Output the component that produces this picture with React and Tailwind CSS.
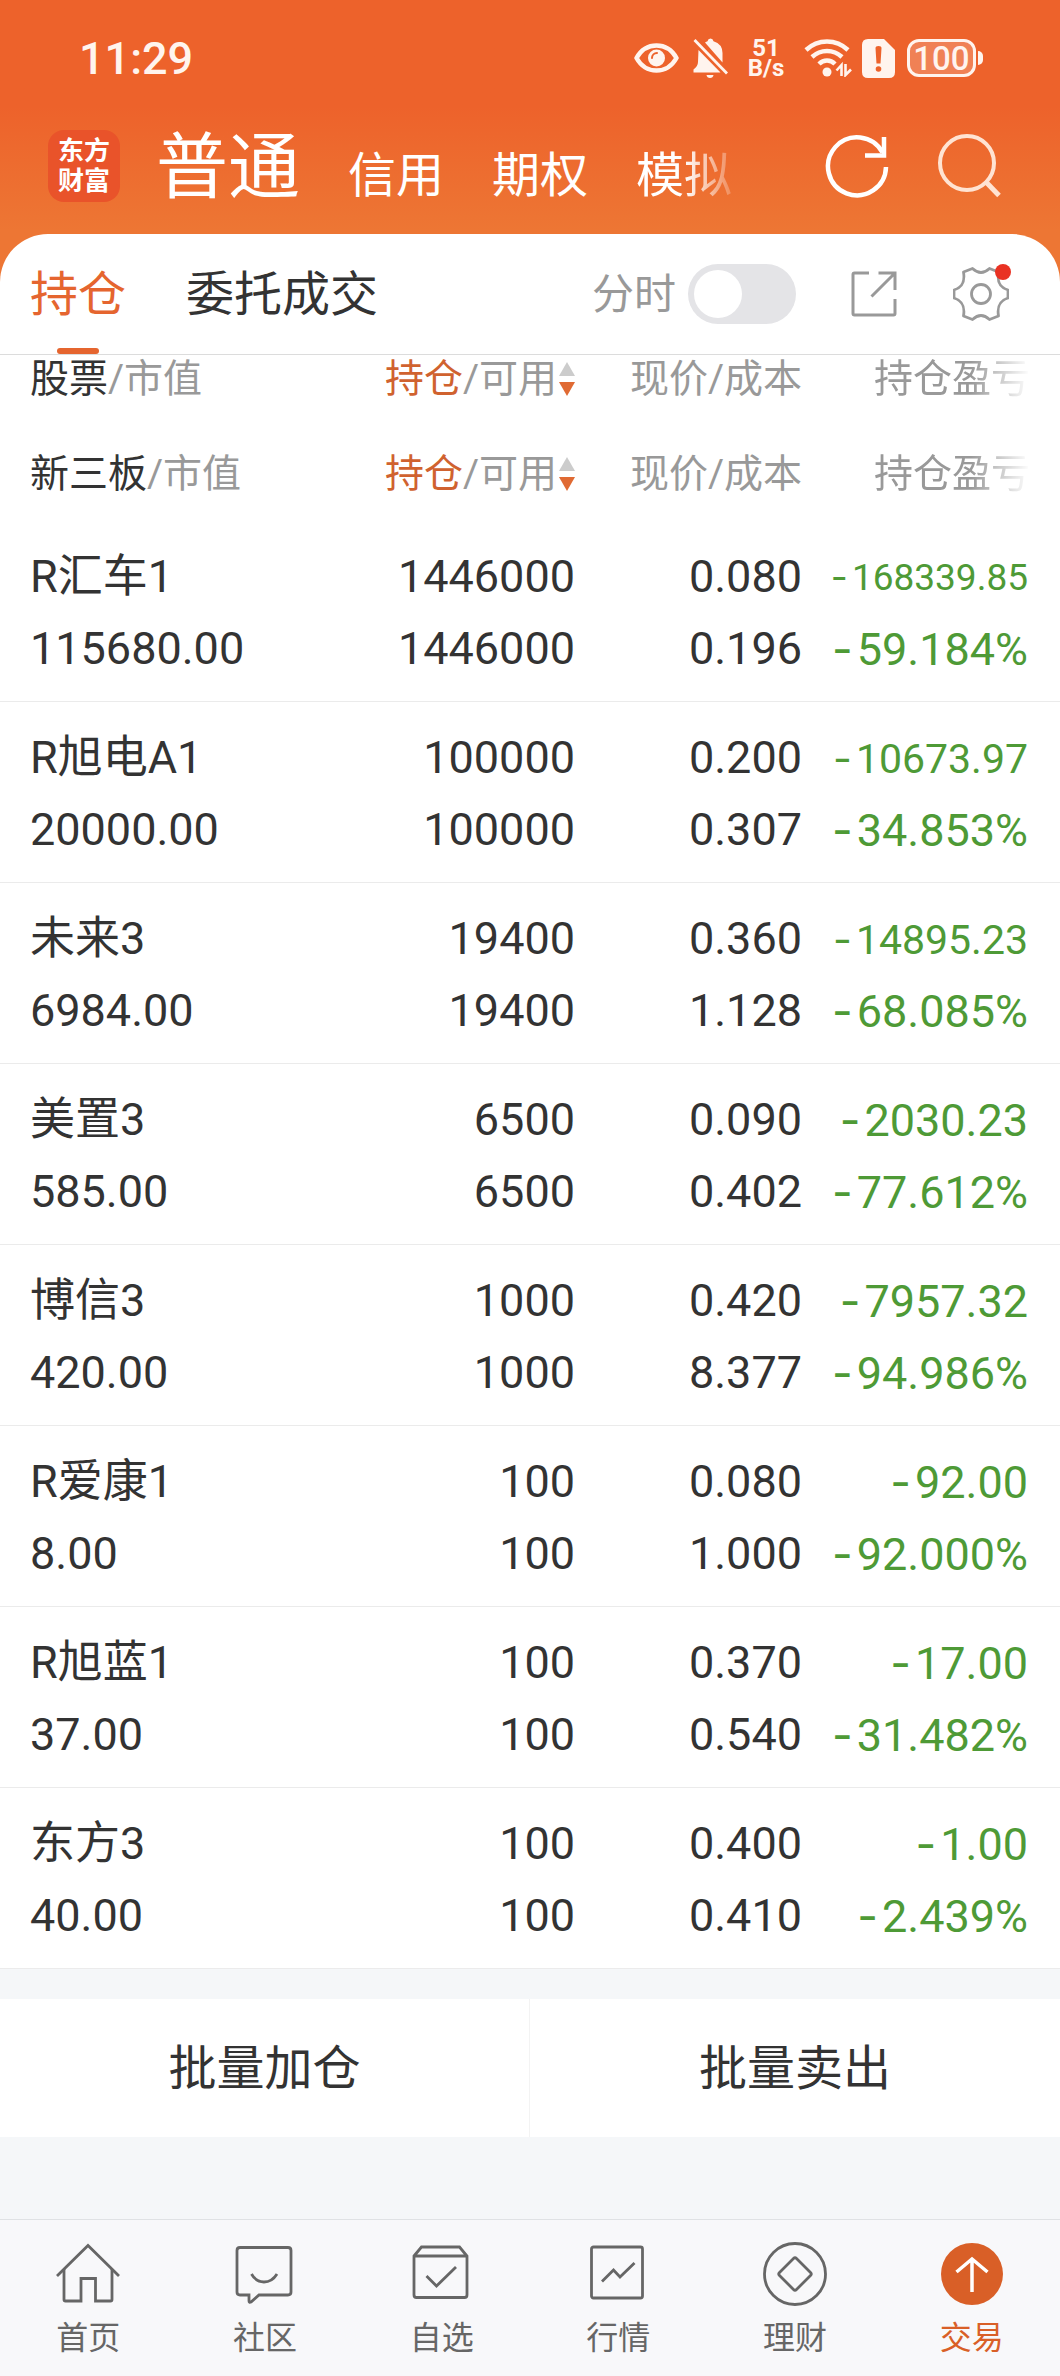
import React, { useState } from 'react';

const holdings = [
  { name: 'R汇车1', value: '115680.00', amount: '1446000', usable: '1446000', price: '0.080', cost: '0.196', profit: '168339.85', rate: '59.184%' },
  { name: 'R旭电A1', value: '20000.00', amount: '100000', usable: '100000', price: '0.200', cost: '0.307', profit: '10673.97', rate: '34.853%' },
  { name: '未来3', value: '6984.00', amount: '19400', usable: '19400', price: '0.360', cost: '1.128', profit: '14895.23', rate: '68.085%' },
  { name: '美置3', value: '585.00', amount: '6500', usable: '6500', price: '0.090', cost: '0.402', profit: '2030.23', rate: '77.612%' },
  { name: '博信3', value: '420.00', amount: '1000', usable: '1000', price: '0.420', cost: '8.377', profit: '7957.32', rate: '94.986%' },
  { name: 'R爱康1', value: '8.00', amount: '100', usable: '100', price: '0.080', cost: '1.000', profit: '92.00', rate: '92.000%' },
  { name: 'R旭蓝1', value: '37.00', amount: '100', usable: '100', price: '0.370', cost: '0.540', profit: '17.00', rate: '31.482%' },
  { name: '东方3', value: '40.00', amount: '100', usable: '100', price: '0.400', cost: '0.410', profit: '1.00', rate: '2.439%' },
];

// long amounts shrink so that they stay inside the last column
const profitSize = (text) => {
  if (text.length > 8) return 'text-[37px]';
  if (text.length > 7) return 'text-[41px]';
  return 'text-[45px]';
};

const StatusBar = () => (
  <div className="flex h-[116px] items-center pr-[77px] pl-[79px] text-[#fff4ee]">
    <span className="mr-auto text-[45px] leading-none font-medium">11:29</span>
    <svg className="h-[30px] w-[45px]" viewBox="0 0 45 30" fill="none">
      <path d="M2.5 15C7 7 14 2.5 22.5 2.5S38 7 42.5 15C38 23 31 27.500 22.500 27.500S7 23 2.500 15Z" stroke="currentColor" strokeWidth="4.500" strokeLinejoin="round" />
      <circle cx="22.5" cy="15" r="8.5" fill="currentColor" />
      <path d="M18 15a5 5 0 0 1 5-5" stroke="#ed622b" strokeWidth="2" strokeLinecap="round" />
    </svg>
    <svg className="ml-3.5 h-10 w-[35px]" viewBox="0 0 35 40" fill="none">
      <path d="M12 4.500Q13.500 3.500 14.500 3.200Q15 0.500 17.500 0.500T20.500 3.200Q29.500 6 29.500 15V24.500Z" fill="currentColor" />
      <path d="M5.500 12L27.500 34.500H0.500V31.500Q5 28 5 24Z" fill="currentColor" />
      <path d="M1.500 2L34 35.500" stroke="currentColor" strokeWidth="2.800" />
      <path d="M13.500 37H20.500Q20 40 17 40T13.500 37Z" fill="currentColor" />
    </svg>
    <span className="ml-[18px] w-10 text-center text-[24px] leading-[20px] font-bold">
      51
      <br />
      B/s
    </span>
    <svg className="ml-[18px] h-[38px] w-12" viewBox="0 0 48 38" fill="none">
      <path d="M2 11Q11 2.500 23 2.500T44 11" stroke="currentColor" strokeWidth="4.500" />
      <path d="M8 18Q14.500 12 23 12T38 18" stroke="currentColor" strokeWidth="4.500" />
      <path d="M15 25Q18.500 21.500 23 21.500T31 25" stroke="currentColor" strokeWidth="4.500" />
      <circle cx="23" cy="33" r="4.500" fill="currentColor" />
      <path d="M37.500 37V26L32.500 31.500M41.500 25V36L47 30.500" stroke="currentColor" strokeWidth="2.600" />
    </svg>
    <svg className="ml-2.5 h-[39px] w-[33px]" viewBox="0 0 33 39">
      <path d="M6 0H22L33 11V33Q33 39 27 39H6Q0 39 0 33V6Q0 0 6 0Z" fill="currentColor" />
      <path d="M13.500 9Q13.500 7 16.500 7T19.500 9L18.500 24.500H14.500Z" fill="#ed622b" />
      <circle cx="16.5" cy="30" r="2.800" fill="#ed622b" />
    </svg>
    <span className="ml-3 flex h-[38px] w-[69px] items-center justify-center rounded-[12px] border-3 border-[#fff4ee] bg-white/20 text-[33px] leading-none font-medium">
      100
    </span>
    <span className="ml-0.5 h-3.5 w-[5px] rounded-r-md bg-[#fff4ee]" />
  </div>
);

const TopBar = () => (
  <div className="flex h-[118px] items-center pr-[59px] pb-[18px] pl-12 text-white">
    <div className="flex size-[72px] shrink-0 flex-col items-center justify-center rounded-2xl bg-[#e9532a] text-[26px] leading-[30px] font-bold">
      <span>东方</span>
      <span>财富</span>
    </div>
    <nav className="ml-9 flex items-baseline gap-12 pt-3 whitespace-nowrap">
      <a href="#normal" className="text-[72px] leading-[80px]">普通</a>
      <a href="#credit" className="text-[48px] leading-[80px]">信用</a>
      <a href="#option" className="text-[48px] leading-[80px]">期权</a>
      <a href="#demo" className="text-[48px] leading-[80px] [mask-image:linear-gradient(to_right,#000_50%,rgba(0,0,0,0.2))]">模拟</a>
    </nav>
    <button type="button" aria-label="刷新" className="ml-auto">
      <svg className="size-16" viewBox="0 0 64 64" fill="none" stroke="currentColor" strokeWidth="4.500">
        <path d="M61 33A29 29 0 1 1 57.500 18.500" />
        <path d="M59 3V21.500H40" />
      </svg>
    </button>
    <button type="button" aria-label="搜索" className="ml-12 text-[#ffe3d2]">
      <svg className="size-16" viewBox="0 0 64 64" fill="none" stroke="currentColor" strokeWidth="4">
        <circle cx="30" cy="29" r="27" />
        <path d="M49 48L62 61.500" strokeWidth="5" />
      </svg>
    </button>
  </div>
);

const PanelTabs = () => {
  const [minute, setMinute] = useState(false);

  return (
    <div className="flex h-[121px] items-stretch border-b border-[#dcdcdc] pr-[51px] pl-[30px]">
      <button type="button" className="relative pt-0.5 text-[48px] text-[#e5652f]">
        持仓
        <span className="absolute bottom-0 left-1/2 h-1.5 w-[42px] -translate-x-1/2 rounded-full bg-[#e5652f]" />
      </button>
      <button type="button" className="ml-[60px] pt-0.5 text-[48px] text-[#333]">委托成交</button>
      <label className="ml-auto flex items-center gap-3 text-[42px] text-[#999]">
        分时
        <input
          type="checkbox"
          checked={minute}
          onChange={(e) => setMinute(e.target.checked)}
          className="h-[60px] w-[108px] appearance-none rounded-full bg-[#e4e4e7] p-1.5 before:block before:size-12 before:rounded-full before:bg-white checked:bg-[#e5652f] checked:before:ml-auto"
        />
      </label>
      <button type="button" aria-label="分享" className="ml-[55px] text-[#999]">
        <svg className="size-[46px]" viewBox="0 0 46 46" fill="none" stroke="currentColor" strokeWidth="3">
          <path d="M18 2H3.500Q2 2 2 3.500V42.500Q2 44 3.500 44H42.500Q44 44 44 42.500V28" />
          <path d="M27.500 2H44V19M44 2L20.500 25.500" />
        </svg>
      </button>
      <button type="button" aria-label="设置" className="ml-14 text-[#999]">
        <span className="relative block">
          <svg className="size-14" viewBox="0 0 56 56" fill="none" stroke="currentColor" strokeWidth="2.800" strokeLinejoin="round">
            <path d="M19.500 2.500Q28 10.500 36.500 2.500L45.500 6C44 15 46 21 55 24V32C46 35 44 41 45.500 50L36.500 53.500Q28 45.500 19.500 53.500L10.500 50C12 41 10 35 1 32V24C10 21 12 15 10.500 6Z" />
            <circle cx="28" cy="28" r="9.500" />
          </svg>
          <span className="absolute -top-0.5 -right-0.5 size-4 rounded-full bg-[#e93223]" />
        </span>
      </button>
    </div>
  );
};

const HoldingHead = ({ title, cell }) => (
  <>
    <colgroup>
      <col />
      <col className="w-[235px]" />
      <col className="w-[227px]" />
      <col className="w-[258px]" />
    </colgroup>
    <thead className="text-[39px] leading-[44px] whitespace-nowrap text-[#999]">
      <tr>
        <th className={`${cell} pl-[30px] text-left font-normal`}>
          <span className="text-[#333]">{title}</span>/市值
        </th>
        <th className={`${cell} font-normal`}>
          <span className="flex items-center justify-end gap-0.5">
            <span>
              <span className="text-[#d0622f]">持仓</span>/可用
            </span>
            <svg className="h-[34px] w-4" viewBox="0 0 16 34">
              <path d="M8 0L16 14H0Z" fill="#ccc" />
              <path d="M0 20H16L8 34Z" fill="#e06a33" />
            </svg>
          </span>
        </th>
        <th className={`${cell} text-right font-normal`}>现价/成本</th>
        <th className={`${cell} pr-[30px] text-right font-normal`}>
          <span className="[mask-image:linear-gradient(to_right,#000_62%,transparent)]">持仓盈亏</span>
        </th>
      </tr>
    </thead>
  </>
);

// two stacked values of one table cell
const Pair = ({ top, bottom, topClass = '' }) => (
  <>
    <div className={`h-[72px] ${topClass}`}>{top}</div>
    <div className="h-[72px]">{bottom}</div>
  </>
);

const Loss = ({ children }) => (
  <>
    <span className="mr-1 font-[Inter]">-</span>
    {children}
  </>
);

const Holdings = () => (
  <div className="bg-white">
    <table className="w-full table-fixed border-collapse">
      <HoldingHead title="股票" cell="h-[70px] pt-0.5 align-top" />
    </table>
    <table className="w-full table-fixed border-collapse">
      <HoldingHead title="新三板" cell="h-24 pt-0.5 align-middle" />
      <tbody className="text-[45px] leading-[72px] whitespace-nowrap text-[#333]">
        {holdings.map((item) => (
          <tr key={item.name} className="border-b border-[#ebebeb]">
            <td className="pt-5 pb-4 pl-[30px]">
              <Pair top={item.name} bottom={item.value} />
            </td>
            <td className="pt-5 pb-4 text-right">
              <Pair top={item.amount} bottom={item.usable} />
            </td>
            <td className="pt-5 pb-4 text-right">
              <Pair top={item.price} bottom={item.cost} />
            </td>
            <td className="pt-5 pr-8 pb-4 text-right text-[#4e9a36]">
              <Pair
                top={<Loss>{item.profit}</Loss>}
                bottom={<Loss>{item.rate}</Loss>}
                topClass={profitSize(item.profit)}
              />
            </td>
          </tr>
        ))}
      </tbody>
    </table>
  </div>
);

const tabs = [
  {
    label: '首页',
    icon: (
      <>
        <path d="M1 34L32 3.500L63 34" />
        <path d="M8 27V57.500Q8 59 9.500 59H25V36.500H39.500V59H54.500Q56 59 56 57.500V27" />
      </>
    ),
  },
  {
    label: '社区',
    icon: (
      <>
        <path d="M7 5.500H55Q58 5.500 58 8.500V50Q58 53 55 53H26L18 60Q16 61 16 59V53H7Q4 53 4 50V8.500Q4 5.500 7 5.500Z" />
        <path d="M18.500 32Q23 40 31 40T44 32" />
      </>
    ),
  },
  {
    label: '自选',
    icon: (
      <>
        <path d="M4 14L11.500 5H49.500L57 14V53Q57 55.500 54.500 55.500H6.500Q4 55.500 4 53ZM4 14H57" />
        <path d="M16.500 34L26.500 44L46 25" />
      </>
    ),
  },
  {
    label: '行情',
    icon: (
      <>
        <rect x="5.500" y="5" width="51" height="51" rx="2" />
        <path d="M16 39.500L27.500 28L34 35L48.500 21" />
      </>
    ),
  },
  {
    label: '理财',
    icon: (
      <>
        <circle cx="32" cy="32" r="30.500" />
        <path d="M30.500 16.500Q32 15 33.500 16.500L47.500 30.500Q49 32 47.500 33.500L33.500 47.500Q32 49 30.500 47.500L16.500 33.500Q15 32 16.500 30.500Z" />
      </>
    ),
  },
  {
    label: '交易',
    active: true,
    icon: (
      <>
        <circle cx="32" cy="32" r="31" fill="currentColor" stroke="none" />
        <path d="M32 50V17M16.500 30L32 17L47.500 30" stroke="#fff" strokeWidth="3.500" />
      </>
    ),
  },
];

const TabBar = () => (
  <nav className="grid grid-cols-6 border-t border-[#e0e2e5] bg-[#f8f8fa] pt-[22px] pb-[18px]">
    {tabs.map((tab) => (
      <a
        key={tab.label}
        href={`#${tab.label}`}
        className={`flex flex-col items-center gap-3 text-[32px] leading-10 ${tab.active ? 'text-[#d95f27]' : 'text-[#666]'}`}
      >
        <svg className="size-16" viewBox="0 0 64 64" fill="none" stroke="currentColor" strokeWidth="2.800">
          {tab.icon}
        </svg>
        {tab.label}
      </a>
    ))}
  </nav>
);

const App = () => (
  <div className="flex min-h-screen flex-col bg-[#f5f7f9] font-[Roboto,'Noto_Sans_CJK_SC',sans-serif]">
    <header className="bg-linear-to-b from-[#ed622b] from-30% to-[#ed7634] to-65%">
      <StatusBar />
      <TopBar />
      <div className="rounded-t-[48px] bg-white">
        <PanelTabs />
      </div>
    </header>
    <Holdings />
    <div className="mt-[30px] grid grid-cols-2 divide-x divide-[#f3f3f3] bg-white text-[48px] text-[#333]">
      <button type="button" className="h-[138px] pt-0.5">批量加仓</button>
      <button type="button" className="h-[138px] pt-0.5">批量卖出</button>
    </div>
    <div className="mt-auto">
      <TabBar />
    </div>
  </div>
);

export default App;
